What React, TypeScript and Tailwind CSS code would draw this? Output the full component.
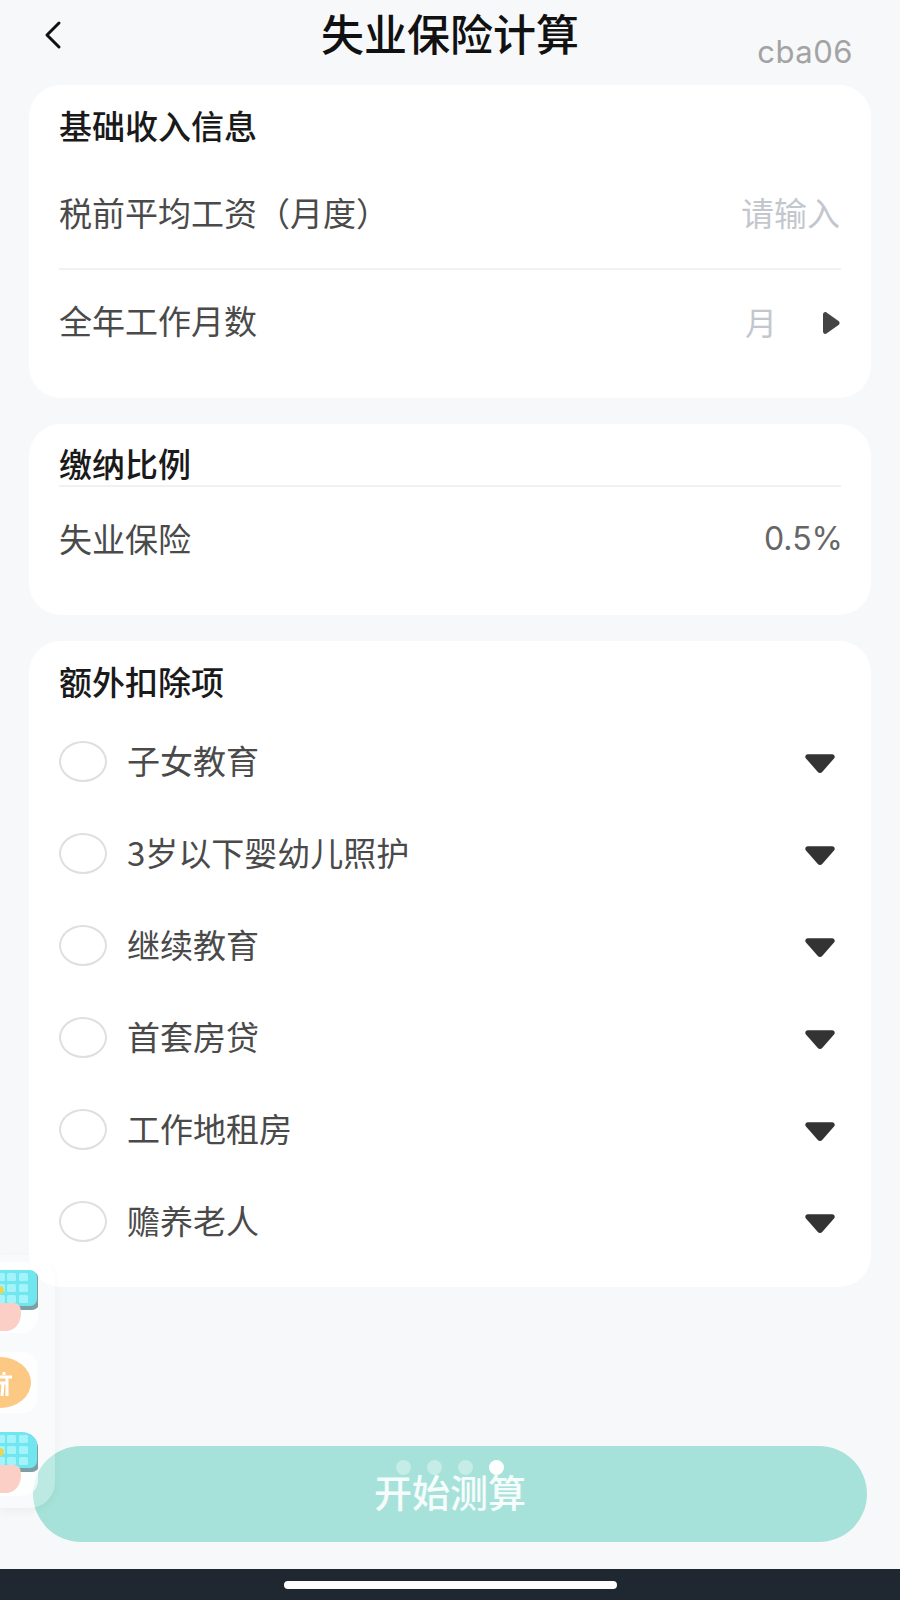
const FONT = "font-['Noto_Sans_CJK_SC','Noto_Sans',sans-serif]";

const DEDUCTIONS = ['子女教育', '3岁以下婴幼儿照护', '继续教育', '首套房贷', '工作地租房', '赡养老人'];

function KeypadIcon() {
  return (
    <svg width="39" height="62" viewBox="0 0 39 62" className="block">
      <rect x="-12" y="2" width="51" height="38" rx="7" fill="#7d9ea3" />
      <rect x="-12" y="0" width="49" height="36" rx="7" fill="#72e6ef" />
      {[3, 14, 25].map(y =>
        [-4, 7, 19].map(x => <rect key={`${x}-${y}`} x={x} y={y} width="9" height="8" rx="1.5" fill="#a2f3fa" />)
      )}
      <circle cx="0" cy="20" r="4" fill="#e5d65a" />
      <path d="M-10 33h23c6 0 8 4 8 10 0 11-7 18-15 18h-16z" fill="#fbcfc6" />
    </svg>
  );
}

function FloatingPanel() {
  return (
    <div className="absolute left-0 top-[1255px] z-10 flex h-[253px] w-[55px] flex-col gap-[19px] rounded-r-[26px] bg-white/25 pt-[7px] shadow-[0_4px_10px_rgba(0,0,0,0.04)]">
      <div className="h-[71px] w-[38px] overflow-hidden rounded-r-[16px] bg-white/70 pt-[8px]">
        <KeypadIcon />
      </div>
      <div className="relative h-[61px] w-[37px] overflow-hidden rounded-r-[14px] bg-white/80">
        <div className="absolute left-[-31px] top-[5px] h-[51px] w-[62px] rounded-[50%] bg-[#fbc983]" />
        <svg width="13" height="26" viewBox="0 0 13 26" className="absolute left-0 top-[19px]">
          <path d="M0 6h12M4 1v3M0 12h8M7 6v19M2 25l1-13" stroke="#fff" strokeWidth="3" fill="none" />
        </svg>
      </div>
      <div className="h-[64px] w-[38px] overflow-hidden rounded-r-[16px] bg-white/70">
        <KeypadIcon />
      </div>
    </div>
  );
}

export default function App() {
  return (
    <div className={`relative flex h-[1600px] w-[900px] flex-col overflow-hidden bg-[#f7f8fa] ${FONT}`}>
      {/* header */}
      <div className="relative flex h-[85px] shrink-0 justify-center pt-[4px]">
        <svg width="20" height="30" viewBox="0 0 20 30" className="absolute left-[43px] top-[20px]">
          <path d="M16 3 4 15l12 12" fill="none" stroke="#111" strokeWidth="3" strokeLinecap="round" strokeLinejoin="round" />
        </svg>
        <span className="text-[43px] leading-[56px] font-medium text-[#111]">失业保险计算</span>
        <span className="absolute right-[47px] top-[33px] font-['Inter',sans-serif] text-[31px] leading-[38px] tracking-[0.5px] text-[#a3a3a3]">cba06</span>
      </div>

      <div className="flex flex-col gap-[26px] px-[29px]">
        {/* income */}
        <section className="h-[313px] rounded-[32px] bg-white px-[30px] pt-[16px]">
          <h2 className="text-[33px] leading-[48px] font-medium text-[#1a1a1a]">基础收入信息</h2>
          <div className="mt-[40px] flex h-[48px] items-center justify-between pr-[1px] text-[33px]">
            <span className="text-[#4a4a4a]">税前平均工资（月度）</span>
            <span className="text-[#c3c7cd]">请输入</span>
          </div>
          <div className="mt-[31px] h-[2px] bg-[#f0f1f3]" />
          <div className="mt-[27px] flex h-[48px] items-center justify-between pr-[1px] text-[33px]">
            <span className="text-[#4a4a4a]">全年工作月数</span>
            <span className="flex items-center gap-[46px]">
              <span className="text-[32px] text-[#c3c7cd]">月</span>
              <svg width="17" height="24" viewBox="0 0 17 24" className="mt-[4px]">
                <path d="M3.500 1.500 15.500 10a2.400 2.400 0 0 1 0 4L3.500 22.500C2 23.500 0 22.500 0 20.500v-17C0 1.500 2 .5 3.500 1.500z" fill="#444" />
              </svg>
            </span>
          </div>
        </section>

        {/* rate */}
        <section className="h-[191px] rounded-[32px] bg-white px-[30px] pt-[17px]">
          <h2 className="text-[33px] leading-[44px] font-medium text-[#1a1a1a]">缴纳比例</h2>
          <div className="h-[2px] bg-[#f0f1f3]" />
          <div className="mt-[28px] flex h-[48px] items-center justify-between text-[33px]">
            <span className="text-[#4a4a4a]">失业保险</span>
            <span className="mr-[-2px] font-['Inter',sans-serif] text-[32px] text-[#666]">0.5%</span>
          </div>
        </section>

        {/* deductions */}
        <section className="h-[646px] rounded-[32px] bg-white px-[30px] pt-[16px]">
          <h2 className="text-[33px] leading-[48px] font-medium text-[#1a1a1a]">额外扣除项</h2>
          <div className="mt-[32px] flex flex-col gap-[44px]">
            {DEDUCTIONS.map(item => (
              <div key={item} className="flex h-[48px] items-center">
                <div className="h-[41px] w-[48px] shrink-0 rounded-[50%] border-2 border-[#dedfe0]" />
                <span className="ml-[20px] text-[33px] text-[#4a4a4a]">{item}</span>
                <svg width="30" height="20" viewBox="0 0 31 20" className="ml-auto mr-[6px] mt-[6px]">
                  <path d="M3 0h25c2.500 0 3.500 2.500 2 4.300L18 18c-1.500 1.700-3.500 1.700-5 0L1 4.300C-.5 2.500.5 0 3 0z" fill="#333" />
                </svg>
              </div>
            ))}
          </div>
        </section>
      </div>

      {/* action */}
      <button className="relative mx-[33px] mb-[27px] mt-auto flex h-[96px] shrink-0 items-center justify-center rounded-full bg-[#a6e2d9] pb-[7px] text-[38px] font-medium text-white/90">
        <span className="absolute left-[363px] top-[14px] flex gap-[16px]">
          <span className="h-[15px] w-[15px] rounded-full bg-white/35" />
          <span className="h-[15px] w-[15px] rounded-full bg-white/35" />
          <span className="h-[15px] w-[15px] rounded-full bg-white/35" />
          <span className="h-[15px] w-[15px] rounded-full bg-white" />
        </span>
        开始测算
      </button>

      {/* home bar */}
      <div className="flex h-[31px] shrink-0 items-center justify-center bg-[#1f2731]">
        <div className="h-[8px] w-[333px] rounded-full bg-white" />
      </div>

      <FloatingPanel />
    </div>
  );
}
